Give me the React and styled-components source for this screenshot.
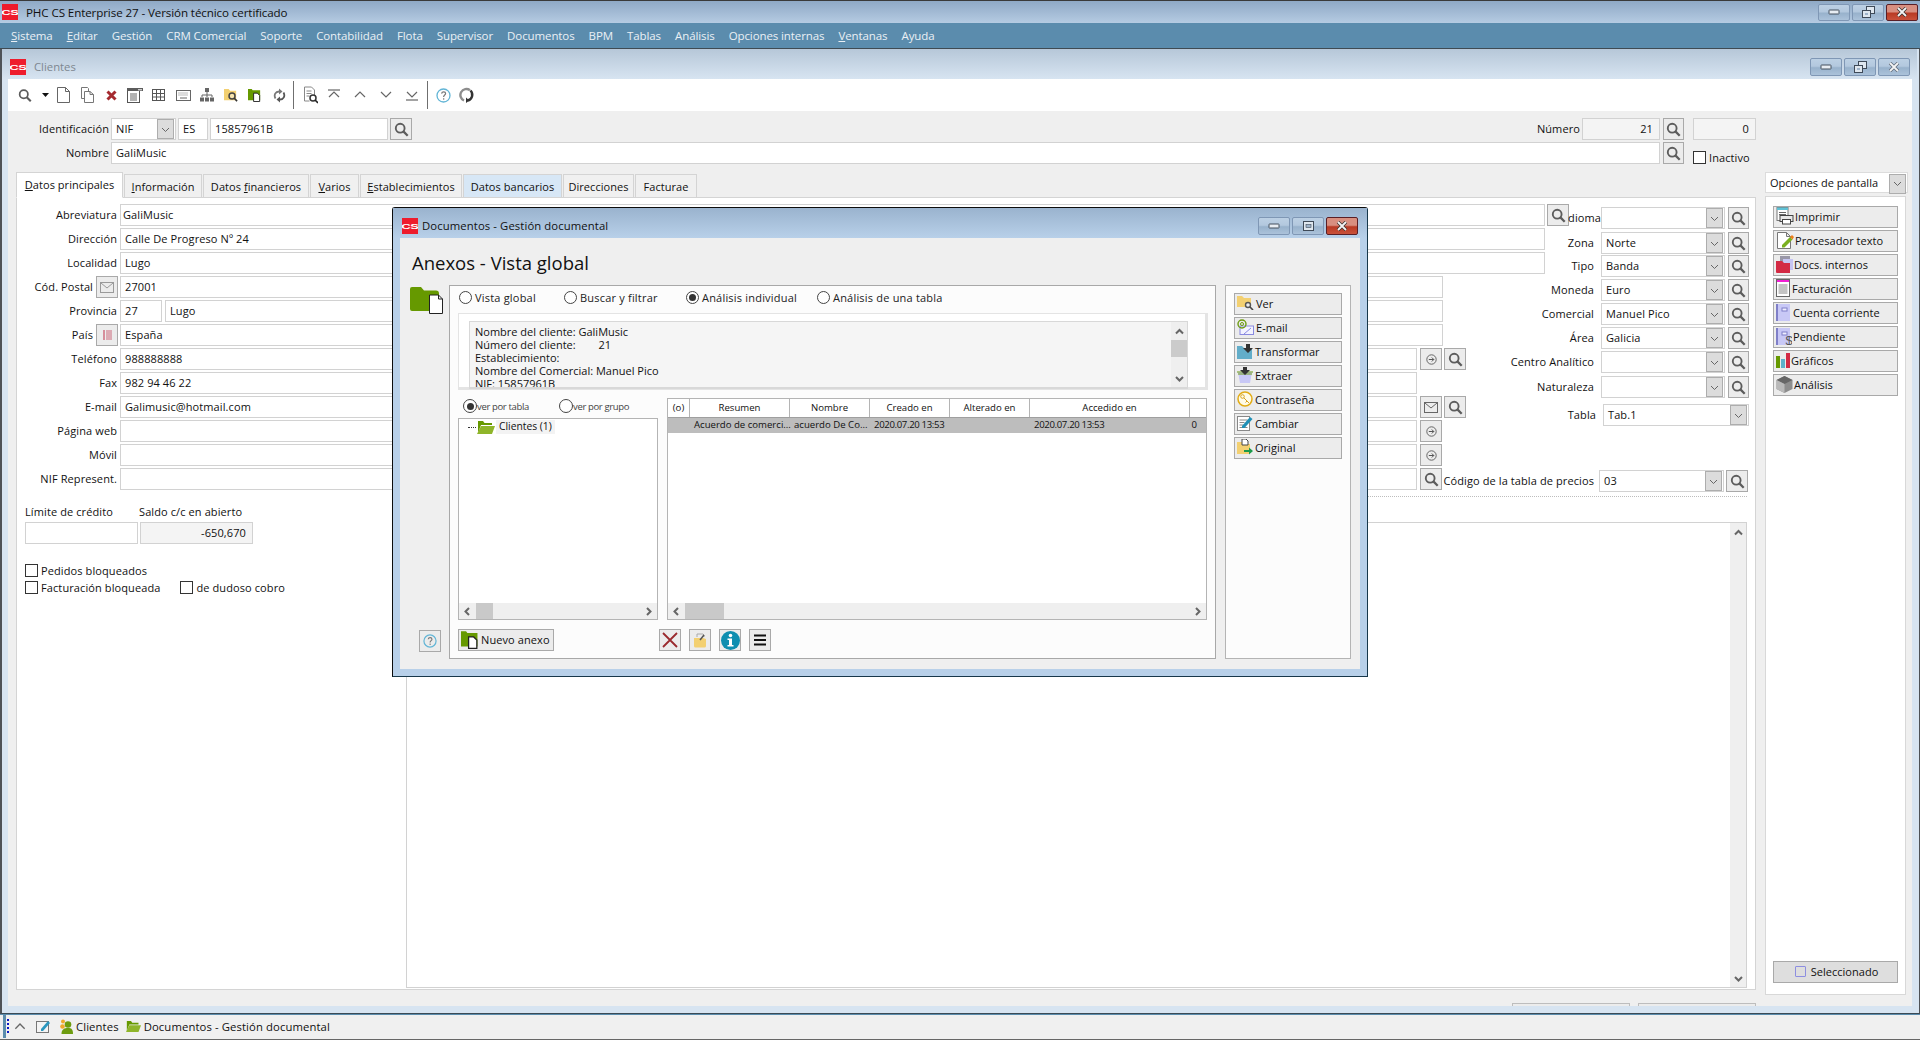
import React from 'react'
import styled, { createGlobalStyle } from 'styled-components'

const Global = createGlobalStyle`
  html, body { margin: 0; padding: 0; background: #efefef; }
  body { font-family: "Open Sans", "Noto Sans", sans-serif; font-size: 11px; color: #111; }
  * { box-sizing: border-box; }
  u { text-underline-offset: 1px; }
`

const Page = styled.div`
  position: relative;
  width: 1920px;
  height: 1040px;
  overflow: hidden;
  display: flex;
  flex-direction: column;
  background: #efefef;
`

const TitleBar = styled.div`
  height: 23px;
  flex: none;
  display: flex;
  align-items: center;
  padding: 0 2px;
  border-top: 1px solid #3a3a3a;
  background: linear-gradient(#8fa9c6, #b5cbe2);
`
const Logo = styled.span`
  width: 16px;
  height: 16px;
  flex: none;
  display: inline-flex;
  align-items: center;
  justify-content: center;
  overflow: hidden;
  background: #ee1c2c;
`
const LogoText = styled.span`
  display: inline-block;
  color: #fff;
  font: 700 9px "Liberation Sans", sans-serif;
  letter-spacing: -0.3px;
  transform: scale(1.45, 0.9);
`
const AppTitle = styled.span`
  margin-left: 8px;
  font-size: 11.6px;
  letter-spacing: -0.1px;
  color: #101010;
`
const WinBtns = styled.div`
  margin-left: auto;
  display: flex;
  gap: 2px;
`
const WinBtn = styled.button`
  width: 32px;
  height: ${p => p.$h || 17}px;
  padding: 0;
  display: flex;
  align-items: center;
  justify-content: center;
  border: 1px solid ${p => (p.$close ? '#5a1f26' : '#7f97b5')};
  border-radius: 2px;
  background: ${p =>
    p.$close
      ? 'linear-gradient(#d88f80 0, #d88f80 45%, #b93a24 55%, #c9513a 100%)'
      : 'linear-gradient(#bcd0e4 0, #b3c8de 45%, #98b2cc 55%, #abc2da 100%)'};
`

const MenuBar = styled.div`
  height: 26px;
  flex: none;
  display: flex;
  align-items: center;
  gap: 14.05px;
  padding: 0 0 1px 11px;
  background: #5b8cad;
  border-bottom: 1px solid #3f4a52;
  color: #eaf0f5;
  font-size: 11.5px;
  letter-spacing: -0.1px;
`

const ClientWindow = styled.div`
  flex: 1;
  min-height: 0;
  display: flex;
  flex-direction: column;
  padding: 0 7px 7px 6px;
  border-left: 2px solid #4e5257;
  border-right: 1px solid #4e5257;
  border-bottom: 1px solid #3b4a55;
  background: #d7e4f1;
`
const ClientTitle = styled.div`
  height: 30px;
  flex: none;
  margin: 0 -5px 0 -6px;
  padding: 5px 7px 0 8px;
  display: flex;
  align-items: center;
  gap: 8px;
  background: linear-gradient(#b6c7d8, #d7e4f1);
  color: #7d8790;
  font-size: 11.3px;
`
const Toolbar = styled.div`
  height: 32px;
  flex: none;
  display: flex;
  align-items: center;
  background: #fff;
`
const ToolSlot = styled.span`
  width: ${p => p.$w}px;
  height: 20px;
  flex: none;
  display: flex;
  align-items: center;
  justify-content: center;
`
const ToolSep = styled.span`
  width: 1px;
  height: 28px;
  flex: none;
  background: #6f6f6f;
`

const Work = styled.div`
  flex: 1;
  min-height: 0;
  display: flex;
  background: #efefef;
`
const LeftSide = styled.div`
  width: 1748px;
  flex: none;
  display: flex;
  flex-direction: column;
  padding-top: 7px;
`
const HeadRow = styled.div`
  height: 22px;
  flex: none;
  display: flex;
  align-items: center;
  margin-bottom: 2px;
`
const Label = styled.span`
  width: ${p => p.$w || 100}px;
  flex: none;
  display: flex;
  justify-content: flex-end;
  white-space: nowrap;
  margin-right: ${p => p.$gap ?? 3}px;
  padding-bottom: 2px;
  letter-spacing: 0.1px;
`
const Field = styled.div`
  height: 22px;
  ${p => (p.$w ? `width: ${p.$w}px; flex: none;` : 'flex: 1; min-width: 0;')}
  margin-right: ${p => p.$mr ?? 0}px;
  margin-left: ${p => p.$ml ?? 0}px;
  display: flex;
  align-items: center;
  justify-content: ${p => (p.$right ? 'flex-end' : 'flex-start')};
  padding: 0 ${p => (p.$right ? 6 : 0)}px 2px ${p => (p.$right ? 0 : p.$pl ?? 4)}px;
  background: ${p => (p.$grey ? '#f4f4f4' : '#fff')};
  border: 1px solid #d2d2d2;
  white-space: nowrap;
  letter-spacing: 0.1px;
`
const ArrowBtn = styled.span`
  width: 17px;
  height: 20px;
  margin: 0 1px -2px auto;
  flex: none;
  display: flex;
  align-items: center;
  justify-content: center;
  background: #dcdcdc;
  border: 1px solid #adadad;
`
const IconBtn = styled.span`
  width: ${p => p.$w || 22}px;
  height: 22px;
  flex: none;
  margin-left: ${p => p.$ml ?? 2}px;
  display: flex;
  align-items: center;
  justify-content: center;
  background: #ececec;
  border: 1px solid #a9a9a9;
`
const Check = styled.span`
  width: 13px;
  height: 13px;
  flex: none;
  display: inline-block;
  margin-left: ${p => p.$ml || 0}px;
  background: #fff;
  border: 1px solid #333;
`
const CheckRow = styled.div`
  display: flex;
  align-items: center;
  gap: 3px;
  white-space: nowrap;
  letter-spacing: 0.1px;
  margin-top: ${p => p.$mt || 0}px;
`
const InactiveBox = styled(CheckRow)`
  width: 63px;
  margin-left: 9px;
  align-self: flex-end;
  margin-bottom: -1px;
`

const TabBar = styled.div`
  height: 26px;
  flex: none;
  display: flex;
  align-items: flex-end;
  margin: 6px 0 -1px 8px;
  gap: 1px;
  position: relative;
`
const Tab = styled.div`
  width: ${p => p.$w}px;
  height: ${p => (p.$active ? 26 : 24)}px;
  flex: none;
  display: flex;
  align-items: center;
  justify-content: center;
  padding-bottom: ${p => (p.$active ? 2 : 0)}px;
  border: 1px solid #d4d4d4;
  border-bottom-color: ${p => (p.$active ? '#fff' : '#d4d4d4')};
  background: ${p => (p.$active ? '#fff' : p.$tint ? '#d7e7f6' : '#f0f0f0')};
  letter-spacing: 0.05px;
  white-space: nowrap;
`
const Panel = styled.div`
  flex: 1;
  min-height: 0;
  margin-left: 8px;
  display: flex;
  flex-direction: column;
  background: #fff;
  border: 1px solid #d4d4d4;
`
const FormTop = styled.div`
  height: 298px;
  flex: none;
  display: flex;
  margin-right: 8px;
`
const FormRule = styled.div`
  height: 1px;
  flex: none;
  margin: 0 8px 0 389px;
  border-bottom: 1px dotted #bdbdbd;
`
const FormLeft = styled.div`
  width: 1553px;
  flex: none;
  padding-top: 6px;
  display: flex;
  flex-direction: column;
  gap: 2px;
`
const FormRow = styled.div`
  height: 22px;
  flex: none;
  display: flex;
  align-items: center;
  padding-right: ${p => p.$pr || 0}px;
`
const FormRight = styled.div`
  flex: 1;
  min-width: 0;
  padding-top: 9px;
  display: flex;
  flex-direction: column;
`
const SideRow = styled.div`
  height: 22px;
  flex: none;
  display: flex;
  align-items: center;
  margin-top: ${p => p.$mt || 0}px;
`
const FormBottom = styled.div`
  flex: 1;
  min-height: 0;
  display: flex;
`
const Credit = styled.div`
  width: 389px;
  flex: none;
  padding: 5px 0 0 8px;
  display: flex;
  flex-direction: column;
`
const CreditHead = styled.div`
  display: flex;
  height: 20px;
  align-items: center;
  padding-bottom: 1px;
  letter-spacing: 0.1px;
`
const CreditHeadCell = styled.span`
  width: ${p => p.$w}px;
  flex: none;
`
const CreditRow = styled.div`
  display: flex;
  gap: 2px;
  margin-bottom: 19px;
`
const Memo = styled.div`
  flex: 1;
  min-width: 0;
  margin: 25px 8px 1px 0;
  display: flex;
  justify-content: flex-end;
  background: #fff;
  border: 1px solid #d2d2d2;
`
const VBar = styled.div`
  width: ${p => p.$w || 16}px;
  flex: none;
  display: flex;
  flex-direction: column;
  align-items: center;
  background: #efefef;
`
const VArrow = styled.span`
  height: 18px;
  flex: none;
  display: flex;
  align-items: center;
  justify-content: center;
`
const VThumb = styled.span`
  width: 100%;
  height: ${p => p.$h}px;
  flex: none;
  background: #cbcbcb;
`
const Grow = styled.span`
  flex: 1;
`
const ClippedBtns = styled.div`
  height: 16px;
  flex: none;
  padding-top: 13px;
  display: flex;
  justify-content: flex-end;
  gap: 8px;
`
const ClippedBtn = styled.span`
  width: 118px;
  height: 3px;
  background: #ececec;
  border: 1px solid #bdbdbd;
  border-bottom: 0;
`

const RightSide = styled.div`
  width: 143px;
  margin-left: 9px;
  flex: none;
  padding: 61px 0 11px;
  display: flex;
  flex-direction: column;
`
const OptionsHead = styled.div`
  height: 21px;
  flex: none;
  display: flex;
  align-items: center;
  padding-left: 4px;
  margin-bottom: 3px;
  background: #fff;
  border: 1px solid #dcdcdc;
  white-space: nowrap;
`
const OptionsBox = styled.div`
  flex: 1;
  width: 141px;
  display: flex;
  flex-direction: column;
  gap: 2px;
  padding: 9px 7px 11px 7px;
  background: #fff;
  border: 1px solid #d8d8d8;
`
const SideBtn = styled.div`
  height: 22px;
  flex: none;
  display: flex;
  align-items: center;
  gap: ${p => p.$gap ?? 1}px;
  padding: 0 0 2px 2px;
  background: ${p => p.$bg || '#ececec'};
  border: 1px solid #a9a9a9;
  letter-spacing: 0.03px;
  white-space: nowrap;
`
const SelectedBtn = styled(SideBtn)`
  margin-top: auto;
  justify-content: center;
  gap: 5px;
  background: #dedede;
`
const SmallBox = styled.span`
  width: 11px;
  height: 11px;
  border: 1px solid #8d8ee0;
  border-radius: 1px;
`

const StatusBar = styled.div`
  height: 26px;
  flex: none;
  display: flex;
  align-items: center;
  padding: 0 0 2px 3px;
  background: #f0f0f0;
  border-top: 1px solid #5b8cad;
  border-bottom: 1px solid #666;
  font-size: 11.3px;
  letter-spacing: 0.1px;
`
const Grip = styled.span`
  width: 3px;
  height: 24px;
  flex: none;
  background: #5b8cad;
  margin-right: 1px;
`
const GripDots = styled.span`
  width: 2px;
  height: 15px;
  flex: none;
  margin-right: 5px;
  background: repeating-linear-gradient(#0b18c4 0 2px, transparent 2px 4px);
`
const StatusItem = styled.span`
  display: flex;
  align-items: center;
  gap: ${p => p.$gap ?? 3}px;
  margin-right: ${p => p.$mr ?? 0}px;
`

/* dialog */
const Dialog = styled.div`
  position: absolute;
  left: 392px;
  top: 207px;
  width: 976px;
  height: 470px;
  display: flex;
  flex-direction: column;
  padding: 0 7px 7px;
  background: #b8d0e9;
  border: 1px solid #0c0c0c;
  border-right-color: #17374a;
  border-bottom-color: #17374a;
  border-radius: 3px 3px 0 0;
`
const DialogTitle = styled.div`
  height: 30px;
  flex: none;
  margin: 0 -7px;
  padding: 5px 9px 0 9px;
  display: flex;
  align-items: center;
  background: linear-gradient(#9ab3ce, #b8d0e9);
  font-size: 11.3px;
  letter-spacing: 0.1px;
`
const DialogName = styled.span`
  margin-left: 4px;
`
const DialogBody = styled.div`
  flex: 1;
  min-height: 0;
  display: flex;
  flex-direction: column;
  padding-bottom: 10px;
  background: #efefef;
`
const Heading = styled.h1`
  height: 47px;
  flex: none;
  margin: 0;
  padding: 11px 0 0 12px;
  font-size: 18.5px;
  font-weight: 400;
  line-height: 28px;
  color: #111;
`
const DialogRow = styled.div`
  flex: 1;
  min-height: 0;
  display: flex;
`
const Gutter = styled.div`
  width: 49px;
  flex: none;
  display: flex;
  flex-direction: column;
  padding: 2px 0 7px 10px;
`
const HelpBtn = styled(IconBtn)`
  margin: auto 0 0 9px;
`
const MainBox = styled.div`
  width: 767px;
  flex: none;
  display: flex;
  flex-direction: column;
  padding: 0 8px 7px;
  background: #fcfcfc;
  border: 1px solid #a8a8a8;
`
const RadioRow = styled.div`
  height: 27px;
  flex: none;
  display: flex;
  align-items: center;
  padding: 0 0 5px 1px;
`
const RadioItem = styled.span`
  width: ${p => p.$w}px;
  flex: none;
  display: flex;
  align-items: center;
  gap: ${p => (p.$small ? 0 : 3)}px;
  white-space: nowrap;
  color: ${p => (p.$small ? '#444' : '#222')};
  font-size: ${p => (p.$small ? 9.5 : 11)}px;
  letter-spacing: ${p => (p.$small ? -0.35 : 0.2)}px;
`
const Radio = styled.span`
  width: ${p => p.$s || 13}px;
  height: ${p => p.$s || 13}px;
  flex: none;
  display: flex;
  align-items: center;
  justify-content: center;
  border: 1px solid #444;
  border-radius: 50%;
  background: #fff;
  &::after {
    content: '';
    display: ${p => (p.$on ? 'block' : 'none')};
    width: 7px;
    height: 7px;
    border-radius: 50%;
    background: #333;
  }
`
const InfoOuter = styled.div`
  width: 750px;
  height: 77px;
  flex: none;
  padding: 7px 17px 0 10px;
  background: #fff;
  border: 1px solid #e4e4e4;
  border-right-width: 3px;
  border-bottom-width: 3px;
`
const InfoBox = styled.div`
  height: 68px;
  display: flex;
  overflow: hidden;
  background: #f5f5f5;
  border: 1px solid #d8d8d8;
  border-bottom-width: 2px;
`
const InfoText = styled.div`
  flex: 1;
  padding: 3px 5px;
  line-height: 13px;
  white-space: pre;
`
const Lower = styled.div`
  flex: 1;
  min-height: 0;
  display: flex;
  gap: 9px;
`
const TreeCol = styled.div`
  width: 200px;
  flex: none;
  display: flex;
  flex-direction: column;
`
const ViewRow = styled.div`
  height: 28px;
  flex: none;
  display: flex;
  align-items: flex-end;
  padding: 0 0 5px 5px;
`
const ListBox = styled.div`
  height: 202px;
  flex: none;
  display: flex;
  flex-direction: column;
  background: #fff;
  border: 1px solid #b4b4b4;
`
const TreeArea = styled.div`
  flex: 1;
  padding-left: 9px;
  display: flex;
  align-items: flex-start;
`
const TreeItem = styled.div`
  display: flex;
  align-items: center;
  height: 16px;
  gap: 1px;
`
const TreeDots = styled.span`
  width: 8px;
  border-top: 1px dotted #333;
`
const TreeLabel = styled.span`
  padding: 0 3px;
  height: 14px;
  line-height: 13px;
  background: #f3f3f3;
  font-size: 10.3px;
`
const HBar = styled.div`
  height: 16px;
  flex: none;
  display: flex;
  align-items: center;
  background: #efefef;
`
const HArrow = styled.span`
  width: 17px;
  flex: none;
  display: flex;
  justify-content: center;
`
const HThumb = styled.span`
  width: ${p => p.$w}px;
  height: 100%;
  flex: none;
  background: #c9c9c9;
`
const GridCol = styled.div`
  width: 540px;
  flex: none;
  height: 222px;
  margin-top: 8px;
  display: flex;
  flex-direction: column;
  background: #fff;
  border: 1px solid #b4b4b4;
`
const GridBody = styled.div`
  flex: 1;
`
const GridLine = styled.div`
  display: grid;
  grid-template-columns: 22px 100px 80px 80px 80px 160px 1fr;
  height: ${p => (p.$head ? 19 : 15)}px;
  align-items: center;
  background: ${p => (p.$head ? '#fff' : '#bdbdbd')};
  border-bottom: ${p => (p.$head ? '1px solid #9f9f9f' : 0)};
  font-size: 9.6px;
`
const HeadCell = styled.span`
  height: 100%;
  display: flex;
  align-items: center;
  justify-content: center;
  padding-bottom: 2px;
  border-right: 1px solid #b4b4b4;
  white-space: nowrap;
`
const Cell = styled.span`
  padding: 0 ${p => (p.$right ? 9 : 0)}px 2px ${p => p.$pl ?? 4}px;
  text-align: ${p => (p.$right ? 'right' : 'left')};
  letter-spacing: ${p => (p.$tight ? -0.35 : 0)}px;
  white-space: nowrap;
`
const ActionRow = styled.div`
  height: 22px;
  flex: none;
  display: flex;
  align-items: center;
`
const NewBtn = styled.div`
  width: 96px;
  height: 22px;
  flex: none;
  display: flex;
  align-items: center;
  gap: 1px;
  padding: 0 0 2px 2px;
  margin-right: 105px;
  background: #ececec;
  border: 1px solid #a9a9a9;
  letter-spacing: 0.1px;
  white-space: nowrap;
`
const SquareBtn = styled(IconBtn)`
  margin: 0 8px 0 0;
`
const ActionBox = styled.div`
  width: 126px;
  margin-left: 9px;
  flex: none;
  display: flex;
  flex-direction: column;
  gap: 2px;
  padding: 7px 8px 0 8px;
  background: #fcfcfc;
  border: 1px solid #b4b4b4;
`

/* drawings */
const Ico = ({ s = 16, h, vb, children }) => (
  <svg width={s} height={h || s} viewBox={vb || `0 0 ${s} ${h || s}`} fill="none">
    {children}
  </svg>
)
const Mag = ({ s = 16, c = '#5c5c5c' }) => (
  <Ico s={s} vb="0 0 16 16">
    <circle cx="6.6" cy="6.6" r="4.7" stroke={c} strokeWidth="2" />
    <path d="M10 10l4.6 4.6" stroke={c} strokeWidth="2.4" />
  </Ico>
)
const Chev = ({ dir = 'down', c = '#666', s = 9, w = 1 }) => {
  const d = { down: 'M1 3l3.5 3.5L8 3', up: 'M1 6.5L4.5 3 8 6.5', left: 'M6 1L2.5 4.5 6 8', right: 'M3 1l3.5 3.5L3 8' }[dir]
  return (
    <Ico s={s} vb="0 0 9 9">
      <path d={d} stroke={c} strokeWidth={w} />
    </Ico>
  )
}
const Caret = () => (
  <Ico s={7} h={4}>
    <path d="M0 0h7L3.5 4z" fill="#111" />
  </Ico>
)
const Minus = () => (
  <Ico s={12} h={6}>
    <rect x="1" y="1" width="10" height="4" rx="0.5" fill="#e8edf3" stroke="#45505e" />
  </Ico>
)
const Restore = () => (
  <Ico s={13} h={12}>
    <rect x="4.5" y="0.5" width="8" height="7" fill="#dfe7ef" stroke="#3f4a58" />
    <rect x="0.5" y="4.5" width="8" height="7" fill="#dfe7ef" stroke="#3f4a58" />
    <rect x="3" y="7" width="3" height="2" fill="#9fb4cb" />
  </Ico>
)
const Maximize = () => (
  <Ico s={11} h={10}>
    <rect x="0.5" y="0.5" width="10" height="9" fill="#dfe7ef" stroke="#3f4a58" />
    <rect x="3" y="3.5" width="5" height="3" fill="#9fb4cb" stroke="#3f4a58" strokeWidth="0.6" />
  </Ico>
)
const CloseX = ({ dim }) => (
  <Ico s={12} h={10}>
    <path d="M2 1l8 8M10 1L2 9" stroke={dim ? '#5f6a78' : '#39322f'} strokeWidth="3.4" />
    <path d="M2 1l8 8M10 1L2 9" stroke="#f4f4f4" strokeWidth="1.8" />
  </Ico>
)
const Doc = ({ s = 13, c = '#666' }) => (
  <Ico s={s} h={s + 3} vb="0 0 13 16">
    <path d="M0.5 0.5h8l4 4v11h-12z M8.500 0.500v4h4" stroke={c} />
  </Ico>
)
const Copy = () => (
  <Ico s={13} h={16}>
    <path d="M0.500 0.500h6l1 1v10h-7z" stroke="#777" />
    <path d="M3.500 4.500h5.500l3.500 3v8h-9z M9 4.500v3h3.500" fill="#fff" stroke="#777" />
  </Ico>
)
const RedX = () => (
  <Ico s={11} h={11}>
    <path d="M1.5 1.5l8 8M9.5 1.5l-8 8" stroke="#a52a2f" strokeWidth="3" />
  </Ico>
)
const ListWin = () => (
  <Ico s={16} h={15}>
    <rect x="0.5" y="0.5" width="12" height="14" stroke="#555" fill="#fff" />
    <rect x="0" y="0" width="16" height="3" fill="#5c5c5c" />
    <rect x="11" y="1" width="4" height="1.4" fill="#ccc" />
    <path d="M3 6h7M3 8h7M3 10h7M3 12h7" stroke="#666" />
  </Ico>
)
const Table = () => (
  <Ico s={13} h={12}>
    <rect x="0.5" y="0.5" width="12" height="11" stroke="#555" />
    <path d="M0 4.5h13M0 8h13M4.5 0v12M8.5 0v12" stroke="#555" />
  </Ico>
)
const Keyboard = () => (
  <Ico s={15} h={11}>
    <rect x="0.5" y="0.5" width="14" height="10" stroke="#666" />
    <path d="M2.5 3h10M2.5 5h10" stroke="#777" strokeDasharray="1 1" />
    <path d="M4 8h7" stroke="#666" />
  </Ico>
)
const Hierarchy = () => (
  <Ico s={14} h={14}>
    <rect x="5" y="0" width="4" height="4" fill="#666" />
    <path d="M7 4v3M2 9V7h10v2M7 7v2" stroke="#666" />
    <rect x="0" y="9.5" width="4" height="4" fill="#666" />
    <rect x="5" y="9.5" width="4" height="4" fill="#666" />
    <rect x="10" y="9.5" width="4" height="4" fill="#666" />
  </Ico>
)
const FolderMag = ({ s = 14 }) => (
  <Ico s={s} vb="0 0 15 15">
    <path d="M0 1h5l1.500 2H13v10H0z" fill="#f3d071" />
    <circle cx="8.6" cy="8.6" r="3.2" stroke="#444" strokeWidth="1.6" fill="#f6e3ad" />
    <path d="M11 11l3 3" stroke="#333" strokeWidth="1.8" />
  </Ico>
)
const GreenFolderDoc = ({ s = 14 }) => (
  <Ico s={s} vb="0 0 15 15">
    <path d="M0 1h4l1 1.4h8V13H0z" fill="#669900" />
    <path d="M6 5.5h4l2.5 2.5v6.5H6z" fill="#fff" stroke="#222" />
  </Ico>
)
const Refresh = () => (
  <Ico s={13} h={15}>
    <path d="M2.500 10.500C0.500 7 2.500 3.500 6 3.500" stroke="#777" strokeWidth="1.800" />
    <path d="M6 0.500v6l3.500-3z" fill="#777" />
    <path d="M10.500 4.500C12.500 8 10.500 11.500 7 11.500" stroke="#555" strokeWidth="1.800" />
    <path d="M7 8.500v6l-3.500-3z" fill="#555" />
  </Ico>
)
const Preview = () => (
  <Ico s={15} h={18}>
    <path d="M1.5 1h7l3 3v6M1.5 1v14h5" stroke="#888" />
    <path d="M3.5 5h5M3.5 7.5h5M3.5 10h3" stroke="#888" />
    <circle cx="10" cy="12" r="3" stroke="#333" strokeWidth="1.5" />
    <path d="M12 14l3 3" stroke="#222" strokeWidth="1.6" />
  </Ico>
)
const NavIcon = ({ kind }) => {
  const up = 'M2 9l5-5 5 5'
  const down = 'M2 4l5 5 5-5'
  return (
    <Ico s={14} h={14}>
      <path d={kind === 'first' || kind === 'up' ? up : down} stroke="#666" strokeWidth="1.2" />
      {kind === 'first' && <path d="M1 2h12" stroke="#666" strokeWidth="1.2" />}
      {kind === 'last' && <path d="M1 12h12" stroke="#666" strokeWidth="1.2" />}
    </Ico>
  )
}
const Help = ({ s = 15 }) => (
  <Ico s={s} vb="0 0 15 15">
    <circle cx="7.5" cy="7.5" r="6.5" stroke="#62b5d6" strokeWidth="1.3" />
    <path d="M5.6 5.6c.3-2.3 4-2.3 4 0 0 1.5-2 1.5-2 3.4" stroke="#777" strokeWidth="1.2" />
    <rect x="7" y="10.3" width="1.3" height="1.3" fill="#777" />
  </Ico>
)
const Ring = () => (
  <Ico s={16} h={16}>
    <path d="M11 3.2A6 6 0 1 0 5 13.5" stroke="#8d8d8d" strokeWidth="2.4" />
    <path d="M11.5 3.5A6 6 0 0 1 9 13.5" stroke="#333" strokeWidth="2.4" />
    <path d="M7 10.5l3.5 3-3.5 2.5z" fill="#333" />
  </Ico>
)
const Envelope = ({ c = '#777', s = 14 }) => (
  <Ico s={s} h={s - 3} vb="0 0 14 11">
    <rect x="0.5" y="0.5" width="13" height="10" stroke={c} />
    <path d="M1 1l6 5 6-5" stroke={c} />
  </Ico>
)
const FlagList = () => (
  <Ico s={9} h={10}>
    <path d="M0 1h2M0 3h2M0 5h2M0 7h2M0 9h2" stroke="#c0304a" />
    <path d="M3 1h6M3 3h6M3 5h6M3 7h6M3 9h6" stroke="#c0304a" strokeWidth="0.7" />
  </Ico>
)
const CircleArrow = () => (
  <Ico s={11} h={11}>
    <circle cx="5.5" cy="5.5" r="4.7" stroke="#666" />
    <path d="M2.8 5.5h5M5.8 3.5l2 2-2 2" stroke="#555" />
  </Ico>
)
const BigFolder = () => (
  <Ico s={33} h={27}>
    <path d="M2 0h9l3 3.5h12a3 3 0 0 1 3 3V24H2a2 2 0 0 1-2-2V2a2 2 0 0 1 2-2z" fill="#669900" />
    <path d="M19.5 8h9l4 4v14.500h-13z M28.500 8v4h4" fill="#fff" stroke="#222" />
  </Ico>
)
const OpenFolder = ({ s = 18 }) => (
  <Ico s={s} h={Math.round(s * 0.72)} vb="0 0 18 13">
    <path d="M1 0h5l1.500 2H15v2H4L1 12z" fill="#669900" />
    <path d="M4 5h14l-3 8H0z" fill="#8fb52a" />
  </Ico>
)
const Printer = () => (
  <Ico s={18} h={18}>
    <rect x="1" y="0.5" width="11" height="13" fill="#fff" stroke="#777" />
    <rect x="1" y="0.5" width="11" height="2.500" fill="#5fc2d6" />
    <path d="M3 5.500h7M3 7.500h7" stroke="#666" />
    <rect x="4" y="8.500" width="13" height="6" fill="#e8e8e8" stroke="#444" />
    <rect x="6.500" y="12.500" width="8" height="4.500" fill="#fff" stroke="#444" />
  </Ico>
)
const DocPencil = () => (
  <Ico s={18} h={18}>
    <path d="M1.500 1.500h9l4 4v12h-13z M10.500 1.500v4h4" fill="#fff" stroke="#777" />
    <path d="M6 14l8-8 2.500 2.500-8 8H6z" fill="#7ab020" />
    <path d="M14 6l2-2 2 2-1.500 2.500z" fill="#ef7f1a" />
  </Ico>
)
const RedFolder = () => (
  <Ico s={17} h={17}>
    <rect x="4" y="0" width="10" height="12" fill="#9a98a8" />
    <rect x="7" y="3" width="10" height="11" fill="#c6c5f2" />
    <path d="M0 5h6l2 2h6v10H1a1 1 0 0 1-1-1z" fill="#d32a44" />
  </Ico>
)
const Invoice = () => (
  <Ico s={15} h={18}>
    <rect x="0.500" y="0.500" width="13" height="17" fill="#fff" stroke="#666" />
    <rect x="1" y="1" width="12" height="2" fill="#f01fd2" />
    <path d="M2.500 6h9M2.500 8h9M2.500 10h9M2.500 12h9M2.500 14h9" stroke="#888" />
  </Ico>
)
const Book = ({ dollar }) => (
  <Ico s={16} h={17}>
    <rect x="0" y="0" width="14" height="17" fill="#c8c8f6" />
    <rect x="0" y="0" width="2" height="17" fill="#7f7fc8" />
    <rect x="6" y="4" width="5" height="3" fill="#eeeeff" stroke="#7f7fc8" />
    {dollar && (
      <text x="9.500" y="16.500" fontSize="13" fill="#555" fontFamily="Liberation Sans">
        $
      </text>
    )}
  </Ico>
)
const Bars = () => (
  <Ico s={14} h={15}>
    <rect x="0" y="3" width="4" height="12" fill="#669900" />
    <rect x="5" y="6" width="4" height="9" fill="#5fb0c9" />
    <rect x="10" y="0" width="4" height="15" fill="#d32a44" />
  </Ico>
)
const Cube = () => (
  <Ico s={17} h={17}>
    <path d="M8.500 0L16.500 4v9l-8 4-8-4V4z" fill="#8d8d8d" />
    <path d="M0.500 4l8 4 8-4-8-4z" fill="#666" />
    <path d="M0.500 4l8 4v9l-8-4z" fill="#b9b9b9" />
  </Ico>
)
const SmallFolderMag = () => (
  <Ico s={17} h={14}>
    <path d="M0 0h5l2 2h7v9H0z" fill="#f3d071" />
    <circle cx="11" cy="9" r="2.500" fill="#eee" stroke="#555" strokeWidth="1.400" />
    <path d="M13 11l3 3" stroke="#444" strokeWidth="1.600" />
  </Ico>
)
const MailAt = () => (
  <Ico s={17} h={16}>
    <rect x="3" y="7" width="13.500" height="8.500" fill="#f3f3ff" stroke="#8a8ae0" />
    <path d="M7 15l7-6" stroke="#8a8ae0" />
    <circle cx="5" cy="5" r="4" stroke="#6d9c10" strokeWidth="1.400" />
    <circle cx="5" cy="5" r="1.500" stroke="#6d9c10" />
  </Ico>
)
const Transform = () => (
  <Ico s={16} h={15}>
    <path d="M0 2h5l2 2h8v11H0z" fill="#62adc9" />
    <path d="M9 0h4v4h3l-5 5-5-5h3z" fill="#333" />
  </Ico>
)
const Extract = () => (
  <Ico s={16} h={16}>
    <path d="M1 5h14l-2 11H3z" fill="#c8c8f6" />
    <path d="M0 5h16M1 7h14" stroke="#6d9c10" />
    <path d="M6 0h4v3h3l-5 5-5-5h3z" fill="#333" />
  </Ico>
)
const KeyRing = () => (
  <Ico s={16} h={16}>
    <circle cx="8" cy="8" r="7" stroke="#e2ac16" strokeWidth="1.500" fill="#fffbe8" />
    <circle cx="5.500" cy="5.500" r="1.800" stroke="#d8a423" />
    <path d="M7 7l5 5M10 10l-1.500 1.500" stroke="#d8a423" />
  </Ico>
)
const Notepad = () => (
  <Ico s={16} h={16}>
    <rect x="0.500" y="1.500" width="12" height="14" fill="#fff" stroke="#888" />
    <path d="M2.500 5h8M2.500 7.500h5M2.500 10h4M2.500 12.500h8" stroke="#888" />
    <path d="M5 11l8-9 2.500 2-8 9H5z" fill="#1f8fb5" />
  </Ico>
)
const OriginalIco = () => (
  <Ico s={16} h={16}>
    <path d="M0 3h5l1.500 2H13v10H0z" fill="#f3d071" />
    <path d="M5 0h4l2 2v4H5z" fill="#fff" stroke="#444" />
    <path d="M7 11h5V8.500l4 3.500-4 3.500V13H7z" fill="#1b9a4a" />
  </Ico>
)
const BigX = () => (
  <Ico s={16} h={16}>
    <path d="M1 1l14 14M15 1L1 15" stroke="#9a2a2e" strokeWidth="1.800" />
  </Ico>
)
const NoteFolder = () => (
  <Ico s={14} h={15}>
    <path d="M1 5h9l3 1v7a1.500 1.500 0 0 1-1.500 1.500h-9A1.500 1.500 0 0 1 1 13z" fill="#f3d071" />
    <path d="M4 4V1h6l1 1v2" stroke="#aaa" />
    <path d="M7 7l4-5" stroke="#555" strokeWidth="1.500" />
  </Ico>
)
const InfoDisc = () => (
  <Ico s={19} h={19}>
    <circle cx="9.500" cy="9.500" r="9.500" fill="#0e8eb0" />
    <circle cx="9.500" cy="4.500" r="1.800" fill="#fff" />
    <path d="M6.500 7.500h4.500V14h1.500v1.500h-6V14H8V9H6.500z" fill="#fff" />
  </Ico>
)
const Burger = () => (
  <Ico s={12} h={12}>
    <path d="M0 1.500h12M0 6h12M0 10.500h12" stroke="#111" strokeWidth="2" />
  </Ico>
)
const Pencil = () => (
  <Ico s={15} h={14}>
    <rect x="0.500" y="2.500" width="12" height="11" stroke="#777" fill="#f4f4f4" />
    <path d="M5 10l7-8 2 2-7 8H5z" fill="#2b97bf" />
  </Ico>
)
const Person = () => (
  <Ico s={13} h={15}>
    <circle cx="8" cy="5.500" r="3.300" fill="#6d9c10" />
    <path d="M1.500 15c0-5 3-6 6.500-6s5 1 5 6z" fill="#6d9c10" />
    <circle cx="3" cy="2.500" r="2" fill="#f0a92c" />
    <circle cx="2.500" cy="7.500" r="2.300" fill="#f0a92c" />
  </Ico>
)

const CsLogo = () => (
  <Logo><LogoText>CS</LogoText></Logo>
)
const SearchBtn = ({ w, ml, s = 15 }) => (
  <IconBtn $w={w} $ml={ml}>
    <Mag s={s} />
  </IconBtn>
)
const Combo = ({ w, ml, children }) => (
  <Field $w={w} $ml={ml}>
    {children}
    <ArrowBtn>
      <Chev />
    </ArrowBtn>
  </Field>
)

const menus = [
  ['S', 'istema'], ['E', 'ditar'], ['', 'Gestión'], ['', 'CRM Comercial'], ['', 'Soporte'], ['', 'Contabilidad'],
  ['', 'Flota'], ['', 'Supervisor'], ['', 'Documentos'], ['', 'BPM'], ['', 'Tablas'], ['', 'Análisis'],
  ['', 'Opciones internas'], ['V', 'entanas'], ['', 'Ayuda'],
]

const toolbar = [
  [10], [14, <Mag s={15} />], [10], [7, <Caret />], [8], [13, <Doc />], [11], [13, <Copy />], [12], [11, <RedX />], [10],
  [16, <ListWin />], [9], [13, <Table />], [11], [15, <Keyboard />], [9], [14, <Hierarchy />], [10], [14, <FolderMag />],
  [10], [14, <GreenFolderDoc />], [11], [13, <Refresh />], [7], 'sep', [9], [15, <Preview />], [9],
  [14, <NavIcon kind="first" />], [12], [14, <NavIcon kind="up" />], [12], [14, <NavIcon kind="down" />], [12],
  [14, <NavIcon kind="last" />], [8], 'sep', [8], [15, <Help />], [8], [16, <Ring />],
]

const tabs = [
  { w: 107, t: <span><u>D</u>atos principales</span>, active: true },
  { w: 78, t: <span><u>I</u>nformación</span> },
  { w: 106, t: <span>Datos <u>f</u>inancieros</span> },
  { w: 49, t: <span><u>V</u>arios</span> },
  { w: 102, t: <span><u>E</u>stablecimientos</span> },
  { w: 99, t: 'Datos bancarios', tint: true },
  { w: 71, t: 'Direcciones' },
  { w: 62, t: 'Facturae' },
]

const sideRows = [
  { l: 'dioma', v: '', mt: 0, lw: 31, gap: 0 },
  { l: 'Zona', v: 'Norte', mt: 3 },
  { l: 'Tipo', v: 'Banda', mt: 1 },
  { l: 'Moneda', v: 'Euro', mt: 2 },
  { l: 'Comercial', v: 'Manuel Pico', mt: 2 },
  { l: 'Área', v: 'Galicia', mt: 2 },
  { l: 'Centro Analítico', v: '', mt: 2 },
  { l: 'Naturaleza', v: '', mt: 3 },
]

const sideButtons = [
  [<Printer />, 'Imprimir'], [<DocPencil />, 'Procesador texto'], [<RedFolder />, 'Docs. internos'],
  [<Invoice />, 'Facturación'], [<Book />, 'Cuenta corriente'], [<Book dollar />, 'Pendiente'],
  [<Bars />, 'Gráficos'], [<Cube />, 'Análisis'],
]

const dialogButtons = [
  [<SmallFolderMag />, 'Ver'], [<MailAt />, 'E-mail'], [<Transform />, 'Transformar'], [<Extract />, 'Extraer'],
  [<KeyRing />, 'Contraseña'], [<Notepad />, 'Cambiar'], [<OriginalIco />, 'Original'],
]

const info = `Nombre del cliente: GaliMusic
Número del cliente:        21
Establecimiento:
Nombre del Comercial: Manuel Pico
NIF: 15857961B`

const App = () => (
  <Page>
    <Global />
    <TitleBar>
      <CsLogo />
      <AppTitle>PHC CS Enterprise 27 - Versión técnico certificado</AppTitle>
      <WinBtns>
        <WinBtn><Minus /></WinBtn>
        <WinBtn><Restore /></WinBtn>
        <WinBtn $close><CloseX /></WinBtn>
      </WinBtns>
    </TitleBar>
    <MenuBar>
      {menus.map(([u, rest]) => (
        <span key={u + rest}>{u && <u>{u}</u>}{rest}</span>
      ))}
    </MenuBar>

    <ClientWindow>
      <ClientTitle>
        <CsLogo />
        Clientes
        <WinBtns>
          <WinBtn $h={18}><Minus /></WinBtn>
          <WinBtn $h={18}><Restore /></WinBtn>
          <WinBtn $h={18}><CloseX dim /></WinBtn>
        </WinBtns>
      </ClientTitle>
      <Toolbar>
        {toolbar.map((t, i) =>
          t === 'sep' ? <ToolSep key={i} /> : <ToolSlot key={i} $w={t[0]}>{t[1]}</ToolSlot>
        )}
      </Toolbar>
      <Work>
        <LeftSide>
          <HeadRow>
            <Label $w={101} $gap={2}>Identificación</Label>
            <Combo w={65}>NIF</Combo>
            <Field $w={30} $ml={2}>ES</Field>
            <Field $w={178} $ml={2}>15857961B</Field>
            <SearchBtn />
            <Grow />
            <Label $w={50} $gap={2}>Número</Label>
            <Field $w={78} $right $grey>21</Field>
            <SearchBtn w={21} ml={3} />
            <Field $w={63} $ml={9} $right $grey>0</Field>
          </HeadRow>
          <HeadRow>
            <Label $w={101} $gap={2}>Nombre</Label>
            <Field>GaliMusic</Field>
            <SearchBtn w={21} ml={3} />
            <InactiveBox>
              <Check />Inactivo
            </InactiveBox>
          </HeadRow>
          <TabBar>
            {tabs.map(t => (
              <Tab key={t.w} $w={t.w} $active={t.active} $tint={t.tint}>{t.t}</Tab>
            ))}
          </TabBar>
          <Panel>
            <FormTop>
              <FormLeft>
                <FormRow $pr={1}><Label>Abreviatura</Label><Field $pl={2}>GaliMusic</Field><SearchBtn /></FormRow>
                <FormRow $pr={25}><Label>Dirección</Label><Field>Calle De Progreso Nº 24</Field></FormRow>
                <FormRow $pr={25}><Label>Localidad</Label><Field>Lugo</Field></FormRow>
                <FormRow $pr={127}>
                  <Label $w={76}>Cód. Postal</Label>
                  <IconBtn $ml={0}><Envelope c="#9a9a9a" /></IconBtn>
                  <Field $ml={2}>27001</Field>
                </FormRow>
                <FormRow $pr={127}>
                  <Label>Provincia</Label>
                  <Field $w={42}>27</Field>
                  <Field $ml={3}>Lugo</Field>
                </FormRow>
                <FormRow $pr={127}>
                  <Label $w={76}>País</Label>
                  <IconBtn $ml={0}><FlagList /></IconBtn>
                  <Field $ml={2}>España</Field>
                </FormRow>
                <FormRow $pr={104}>
                  <Label>Teléfono</Label><Field>988888888</Field>
                  <IconBtn $ml={3}><CircleArrow /></IconBtn><SearchBtn />
                </FormRow>
                <FormRow $pr={153}><Label>Fax</Label><Field>982 94 46 22</Field></FormRow>
                <FormRow $pr={104}>
                  <Label>E-mail</Label><Field>Galimusic@hotmail.com</Field>
                  <IconBtn $ml={3}><Envelope c="#666" /></IconBtn><SearchBtn />
                </FormRow>
                <FormRow $pr={128}>
                  <Label>Página web</Label><Field /><IconBtn $ml={3}><CircleArrow /></IconBtn>
                </FormRow>
                <FormRow $pr={128}>
                  <Label>Móvil</Label><Field /><IconBtn $ml={3}><CircleArrow /></IconBtn>
                </FormRow>
                <FormRow $pr={128}>
                  <Label>NIF Represent.</Label><Field /><SearchBtn ml={3} />
                </FormRow>
              </FormLeft>
              <FormRight>
                {sideRows.map(r => (
                  <SideRow key={r.l} $mt={r.mt}>
                    <Label $w={r.lw ?? 24} $gap={r.gap ?? 7}>{r.l}</Label>
                    <Combo w={124}>{r.v}</Combo>
                    <SearchBtn w={21} ml={3} />
                  </SideRow>
                ))}
                <SideRow $mt={6}>
                  <Label $w={26} $gap={7}>Tabla</Label>
                  <Combo w={146}>Tab.1</Combo>
                </SideRow>
                <SideRow $mt={44}>
                  <Label $w={24} $gap={5}>Código de la tabla de precios</Label>
                  <Combo w={125}>03</Combo>
                  <SearchBtn w={22} ml={2} />
                </SideRow>
              </FormRight>
            </FormTop>
            <FormRule />
            <FormBottom>
              <Credit>
                <CreditHead>
                  <CreditHeadCell $w={114}>Límite de crédito</CreditHeadCell>
                  <CreditHeadCell $w={114}>Saldo c/c en abierto</CreditHeadCell>
                </CreditHead>
                <CreditRow>
                  <Field $w={113} />
                  <Field $w={113} $right $grey>-650,670</Field>
                </CreditRow>
                <CheckRow><Check />Pedidos bloqueados</CheckRow>
                <CheckRow $mt={2}>
                  <Check />Facturación bloqueada
                  <Check $ml={17} />de dudoso cobro
                </CheckRow>
              </Credit>
              <Memo>
                <VBar>
                  <VArrow><Chev dir="up" w={2} /></VArrow>
                  <Grow />
                  <VArrow><Chev w={2} /></VArrow>
                </VBar>
              </Memo>
            </FormBottom>
          </Panel>
          <ClippedBtns>
            <ClippedBtn />
            <ClippedBtn />
          </ClippedBtns>
        </LeftSide>
        <RightSide>
          <OptionsHead>
            Opciones de pantalla
            <ArrowBtn><Chev /></ArrowBtn>
          </OptionsHead>
          <OptionsBox>
            {sideButtons.map(([ic, t]) => (
              <SideBtn key={t}>{ic}{t}</SideBtn>
            ))}
            <SelectedBtn><SmallBox />Seleccionado</SelectedBtn>
          </OptionsBox>
        </RightSide>
      </Work>
    </ClientWindow>

    <StatusBar>
      <Grip />
      <GripDots />
      <StatusItem $mr={10}><Chev dir="up" c="#666" s={12} /></StatusItem>
      <StatusItem $mr={9}><Pencil /></StatusItem>
      <StatusItem $mr={7}><Person />Clientes</StatusItem>
      <StatusItem $gap={3}><OpenFolder s={15} />Documentos - Gestión documental</StatusItem>
    </StatusBar>

    <Dialog>
      <DialogTitle>
        <CsLogo />
        <DialogName>Documentos - Gestión documental</DialogName>
        <WinBtns>
          <WinBtn $h={18}><Minus /></WinBtn>
          <WinBtn $h={18}><Maximize /></WinBtn>
          <WinBtn $h={18} $close><CloseX /></WinBtn>
        </WinBtns>
      </DialogTitle>
      <DialogBody>
        <Heading>Anexos - Vista global</Heading>
        <DialogRow>
          <Gutter>
            <BigFolder />
            <HelpBtn><Help s={14} /></HelpBtn>
          </Gutter>
          <MainBox>
            <RadioRow>
              <RadioItem $w={105}><Radio />Vista global</RadioItem>
              <RadioItem $w={122}><Radio />Buscar y filtrar</RadioItem>
              <RadioItem $w={131}><Radio $on />Análisis individual</RadioItem>
              <RadioItem $w={140}><Radio />Análisis de una tabla</RadioItem>
            </RadioRow>
            <InfoOuter>
              <InfoBox>
                <InfoText>{info}</InfoText>
                <VBar>
                  <VArrow><Chev dir="up" w={2} /></VArrow>
                  <VThumb $h={17} />
                  <Grow />
                  <VArrow><Chev w={2} /></VArrow>
                </VBar>
              </InfoBox>
            </InfoOuter>
            <Lower>
              <TreeCol>
                <ViewRow>
                  <RadioItem $w={96} $small><Radio $s={14} $on />ver por tabla</RadioItem>
                  <RadioItem $w={90} $small><Radio $s={14} />ver por grupo</RadioItem>
                </ViewRow>
                <ListBox>
                  <TreeArea>
                    <TreeItem>
                      <TreeDots />
                      <OpenFolder />
                      <TreeLabel>Clientes (1)</TreeLabel>
                    </TreeItem>
                  </TreeArea>
                  <HBar>
                    <HArrow><Chev dir="left" w={2} /></HArrow>
                    <HThumb $w={17} />
                    <Grow />
                    <HArrow><Chev dir="right" w={2} /></HArrow>
                  </HBar>
                </ListBox>
              </TreeCol>
              <GridCol>
                <GridLine $head>
                  <HeadCell>(o)</HeadCell>
                  <HeadCell>Resumen</HeadCell>
                  <HeadCell>Nombre</HeadCell>
                  <HeadCell>Creado en</HeadCell>
                  <HeadCell>Alterado en</HeadCell>
                  <HeadCell>Accedido en</HeadCell>
                  <span />
                </GridLine>
                <GridLine>
                  <span />
                  <Cell>Acuerdo de comerci...</Cell>
                  <Cell>acuerdo De Co...</Cell>
                  <Cell $tight>2020.07.20 13:53</Cell>
                  <span />
                  <Cell $tight>2020.07.20 13:53</Cell>
                  <Cell $right $pl={0}>0</Cell>
                </GridLine>
                <GridBody />
                <HBar>
                  <HArrow><Chev dir="left" w={2} /></HArrow>
                  <HThumb $w={39} />
                  <Grow />
                  <HArrow><Chev dir="right" w={2} /></HArrow>
                </HBar>
              </GridCol>
            </Lower>
            <ActionRow>
              <NewBtn><GreenFolderDoc s={19} />Nuevo anexo</NewBtn>
              <SquareBtn><BigX /></SquareBtn>
              <SquareBtn><NoteFolder /></SquareBtn>
              <SquareBtn><InfoDisc /></SquareBtn>
              <SquareBtn><Burger /></SquareBtn>
            </ActionRow>
          </MainBox>
          <ActionBox>
            {dialogButtons.map(([ic, t]) => (
              <SideBtn key={t} $gap={2}>{ic}{t}</SideBtn>
            ))}
          </ActionBox>
        </DialogRow>
      </DialogBody>
    </Dialog>
  </Page>
)

export default App
